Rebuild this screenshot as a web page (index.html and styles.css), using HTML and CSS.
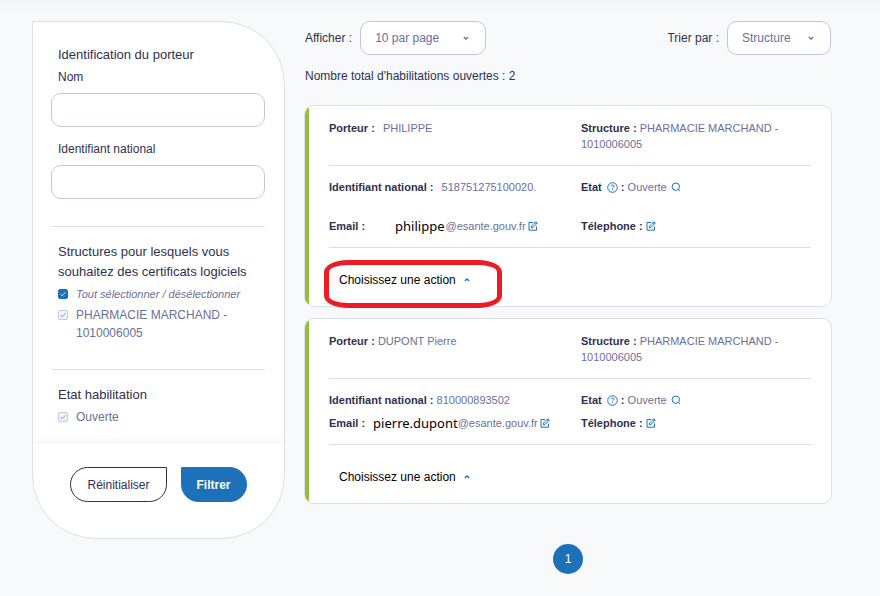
FILE: index.html
```html
<!DOCTYPE html>
<html lang="fr">
<head>
  <meta charset="UTF-8">
  <meta name="viewport" content="width=device-width, initial-scale=1.0">
  <title>Habilitations</title>
  <link rel="stylesheet" href="styles.css">
</head>
<body>
  <!-- Icons -->
  <svg class="sprite" aria-hidden="true">
    <symbol id="icon-edit" viewBox="0 0 10 10">
      <path d="M5 1.5H1v7.7h7.5V5.5M3.3 6.8l.4-1.9L7.9.7l1.4 1.4-4.2 4.2zM7 1.6L8.4 3"/>
    </symbol>
    <symbol id="icon-help" viewBox="0 0 11 11">
      <circle cx="5.5" cy="5.5" r="4.8"/>
      <path d="M4 4.3c0-1.9 3-1.9 3-.1 0 1.1-1.5 1.1-1.5 2.3M5.5 7.4v.9"/>
    </symbol>
    <symbol id="icon-search" viewBox="0 0 10 10">
      <circle cx="4.8" cy="4.7" r="3.7"/>
      <path d="M7.3 7.4L9 9"/>
    </symbol>
    <symbol id="icon-down" viewBox="0 0 6 6">
      <path d="M.8 2L3 4l2.200-2"/>
    </symbol>
    <symbol id="icon-up" viewBox="0 0 6 6">
      <path d="M.8 4L3 2l2.200 2"/>
    </symbol>
  </svg>

  <div class="page">
    <form class="filters">
      <div class="filters-body">
        <section class="group">
          <h2>Identification du porteur</h2>
          <label class="field-label" for="nom">Nom</label>
          <input class="field" type="text" id="nom">
          <label class="field-label" for="idnat">Identifiant national</label>
          <input class="field" type="text" id="idnat">
        </section>

        <section class="group">
          <h2>Structures pour lesquels vous souhaitez des certificats logiciels</h2>
          <label class="check check-all"><input type="checkbox" checked><span>Tout sélectionner / désélectionner</span></label>
          <label class="check"><input type="checkbox" checked disabled><span>PHARMACIE MARCHAND - 1010006005</span></label>
        </section>

        <section class="group">
          <h2>Etat habilitation</h2>
          <label class="check"><input type="checkbox" checked disabled><span>Ouverte</span></label>
        </section>
      </div>

      <div class="filters-footer">
        <button type="reset" class="btn btn-outline">Réinitialiser</button>
        <button type="submit" class="btn btn-primary">Filtrer</button>
      </div>
    </form>

    <main class="results">
      <div class="toolbar">
        <div class="tool">
          <label for="per-page">Afficher :</label>
          <div class="select select-wide">
            <select id="per-page"><option>10 par page</option></select>
            <svg><use href="#icon-down"/></svg>
          </div>
        </div>
        <div class="tool">
          <label for="sort">Trier par :</label>
          <div class="select">
            <select id="sort"><option>Structure</option></select>
            <svg><use href="#icon-down"/></svg>
          </div>
        </div>
      </div>

      <p class="total">Nombre total d'habilitations ouvertes : 2</p>

      <article class="card">
        <div class="row">
          <p class="spaced"><b>Porteur :</b> <span>PHILIPPE</span></p>
          <p><b>Structure :</b> PHARMACIE MARCHAND - 1010006005</p>
        </div>
        <div class="row row-loose">
          <p class="spaced"><b>Identifiant national :</b> <span>518751275100020.</span></p>
          <p><b>Etat <button class="icon-btn help" aria-label="Aide"><svg><use href="#icon-help"/></svg></button> :</b> Ouverte <button class="icon-btn search" aria-label="Détail"><svg><use href="#icon-search"/></svg></button></p>
          <p class="email email-far"><b>Email :</b><span class="user">philippe</span><span>@esante.gouv.fr</span><button class="icon-btn" aria-label="Modifier l'email"><svg><use href="#icon-edit"/></svg></button></p>
          <p><b>Télephone :</b> <button class="icon-btn phone" aria-label="Modifier le téléphone"><svg><use href="#icon-edit"/></svg></button></p>
        </div>
        <div class="action highlighted">
          <button>Choisissez une action <svg><use href="#icon-up"/></svg></button>
        </div>
      </article>

      <article class="card">
        <div class="row">
          <p><b>Porteur :</b> DUPONT Pierre</p>
          <p><b>Structure :</b> PHARMACIE MARCHAND - 1010006005</p>
        </div>
        <div class="row">
          <p><b>Identifiant national :</b> 810000893502</p>
          <p><b>Etat <button class="icon-btn help" aria-label="Aide"><svg><use href="#icon-help"/></svg></button> :</b> Ouverte <button class="icon-btn search" aria-label="Détail"><svg><use href="#icon-search"/></svg></button></p>
          <p class="email"><b>Email :</b><span class="user">pierre.dupont</span><span>@esante.gouv.fr</span><button class="icon-btn" aria-label="Modifier l'email"><svg><use href="#icon-edit"/></svg></button></p>
          <p><b>Télephone :</b> <button class="icon-btn phone" aria-label="Modifier le téléphone"><svg><use href="#icon-edit"/></svg></button></p>
        </div>
        <div class="action">
          <button>Choisissez une action <svg><use href="#icon-up"/></svg></button>
        </div>
      </article>

      <nav class="pagination">
        <a href="#" aria-current="page">1</a>
      </nav>
    </main>
  </div>
</body>
</html>
```
FILE: styles.css
```css
*,
*::after {
  box-sizing: border-box;
}

body {
  margin: 0;
  background: #f8f9fb linear-gradient(#f2f3f6, #f8f9fb) top / 100% 12px no-repeat;
  color: #2f3050;
  font-family: "Liberation Sans", Arial, sans-serif;
  font-size: 12px;
  line-height: 16px;
}

h2, p {
  margin: 0;
}

button, input, select {
  font-family: inherit;
  font-size: 12px;
}

button {
  cursor: pointer;
}

svg {
  fill: none;
  stroke: #1d71b8;
}

.sprite {
  display: none;
}

.page {
  display: flex;
  align-items: flex-start;
  gap: 19px;
  padding: 21px 48px 21px 32px;
}

/* Filters */
.filters {
  flex: 0 0 253px;
  background: #fff;
  border: 1px solid #dddfea;
  border-radius: 0 64px 64px 64px;
  overflow: hidden;
}

.filters-body {
  padding: 0 19px 0 18px;
}

.group {
  padding: 15px 0 27px;
}

.group:first-child {
  padding-top: 23px;
}

.group:last-child {
  padding-bottom: 18px;
}

.group + .group {
  border-top: 1px solid #dddfea;
}

.group h2 {
  padding-left: 7px;
  font-size: 13px;
  font-weight: normal;
  line-height: 20px;
}

.field-label {
  display: block;
  padding: 4px 7px 8px;
}

.field {
  display: block;
  width: 100%;
  height: 34px;
  padding: 0 14px;
  border: 1px solid #c4c5dc;
  border-radius: 10px;
  background: #fff;
}

.field + .field-label {
  padding-top: 14px;
}

.check {
  display: flex;
  gap: 8px;
  padding: 3px 7px 0;
  color: #6a6f9b;
  line-height: 18px;
}

.check-all {
  font-size: 11px;
  font-style: italic;
}

.check input {
  flex: none;
  appearance: none;
  width: 10px;
  height: 10px;
  margin: 4px 0;
  border: 1px solid #c4c9de;
  border-radius: 2px;
  background: #f1f4fa url("data:image/svg+xml,%3Csvg xmlns='http://www.w3.org/2000/svg' viewBox='0 0 8 8'%3E%3Cpath d='M1.500 4.200l1.600 1.500L6.500 2.300' fill='none' stroke='%235aa3d6'/%3E%3C/svg%3E") center / 8px no-repeat;
}

.check-all input {
  border-color: #1d71b8;
  background-color: #1d71b8;
  background-image: url("data:image/svg+xml,%3Csvg xmlns='http://www.w3.org/2000/svg' viewBox='0 0 8 8'%3E%3Cpath d='M1.500 4.200l1.600 1.500L6.500 2.300' fill='none' stroke='%23d5e6f4'/%3E%3C/svg%3E");
}

.filters-footer {
  display: flex;
  justify-content: center;
  gap: 14px;
  padding: 23px 18px 36px;
  box-shadow: 0 -2px 8px rgba(0, 0, 0, 0.06);
}

.btn {
  height: 35px;
  padding: 0 16px;
  border: 1px solid #2f3050;
  border-radius: 18px 0 18px 18px;
  background: #fff;
  color: #2f3050;
}

.btn-primary {
  padding: 0 15px;
  border-color: #1d71b8;
  border-radius: 0 18px 18px 18px;
  background: #1d71b8;
  color: #fff;
  font-weight: bold;
}

/* Results */
.results {
  flex: 1;
  min-width: 0;
}

.toolbar {
  display: flex;
  justify-content: space-between;
  padding: 0 1px;
}

.tool {
  display: flex;
  align-items: center;
  gap: 8px;
}

.select {
  position: relative;
  width: 104px;
}

.select-wide {
  width: 126px;
}

.select select {
  appearance: none;
  display: block;
  width: 100%;
  height: 34px;
  padding: 0 14px;
  border: 1px solid #c4c5dc;
  border-radius: 10px;
  background: #fff;
  color: #6a6f9b;
}

.select svg {
  position: absolute;
  top: 14px;
  right: 17px;
  width: 6px;
  height: 6px;
  stroke: #6a6f9b;
  pointer-events: none;
}

.total {
  padding: 13px 1px 21px;
}

/* Cards */
.card {
  padding: 0 20px 0 24px;
  border: 1px solid #dddfea;
  border-radius: 10px;
  background: linear-gradient(to right, #9abb3c 4px, #fff 4px);
  color: #6a6f9b;
  font-size: 11px;
}

.card + .card {
  margin-top: 11px;
}

.card b {
  color: #2f3050;
}

.row {
  display: grid;
  grid-template-columns: 23fr 21fr;
  row-gap: 7px;
  padding: 13px 0;
  border-bottom: 1px solid #dddfea;
}

.row:first-child {
  padding-top: 14px;
}

.row-loose {
  row-gap: 23px;
}

.spaced span {
  margin-left: 5px;
}

.icon-btn {
  padding: 0;
  border: 0;
  background: none;
  line-height: 0;
  vertical-align: -1px;
}

.icon-btn svg {
  width: 10px;
  height: 10px;
}

.help {
  margin-left: 2px;
  vertical-align: -2px;
}

.help svg {
  width: 11px;
  height: 11px;
}

.search {
  margin-left: 1px;
}

.email {
  display: flex;
  align-items: center;
  white-space: nowrap;
}

.email .user {
  margin-left: 8px;
  color: #000;
  font-family: "Noto Sans", "Open Sans", sans-serif;
  font-size: 13px;
}

.email-far .user {
  margin: 0 1px 0 30px;
}

.email .icon-btn {
  margin-left: 2px;
}

.action {
  position: relative;
  padding: 24px 10px 18px;
}

.action button {
  display: flex;
  align-items: center;
  gap: 8px;
  padding: 0;
  border: 0;
  background: none;
  color: #000;
  line-height: 16px;
}

.action svg {
  width: 6px;
  height: 6px;
}

.select svg,
.action svg {
  stroke-width: 1.3;
}

/* Red ring drawn round the action menu */
.highlighted::after {
  content: "";
  position: absolute;
  top: 12px;
  left: -5px;
  width: 178px;
  height: 48px;
  border: 5px solid #ed1c24;
  border-radius: 24px / 12px;
  pointer-events: none;
}

.pagination {
  display: flex;
  justify-content: center;
  padding-top: 40px;
}

.pagination a {
  width: 30px;
  height: 30px;
  border-radius: 50%;
  background: #1d71b8;
  color: #fff;
  line-height: 30px;
  text-align: center;
  text-decoration: none;
}
```
